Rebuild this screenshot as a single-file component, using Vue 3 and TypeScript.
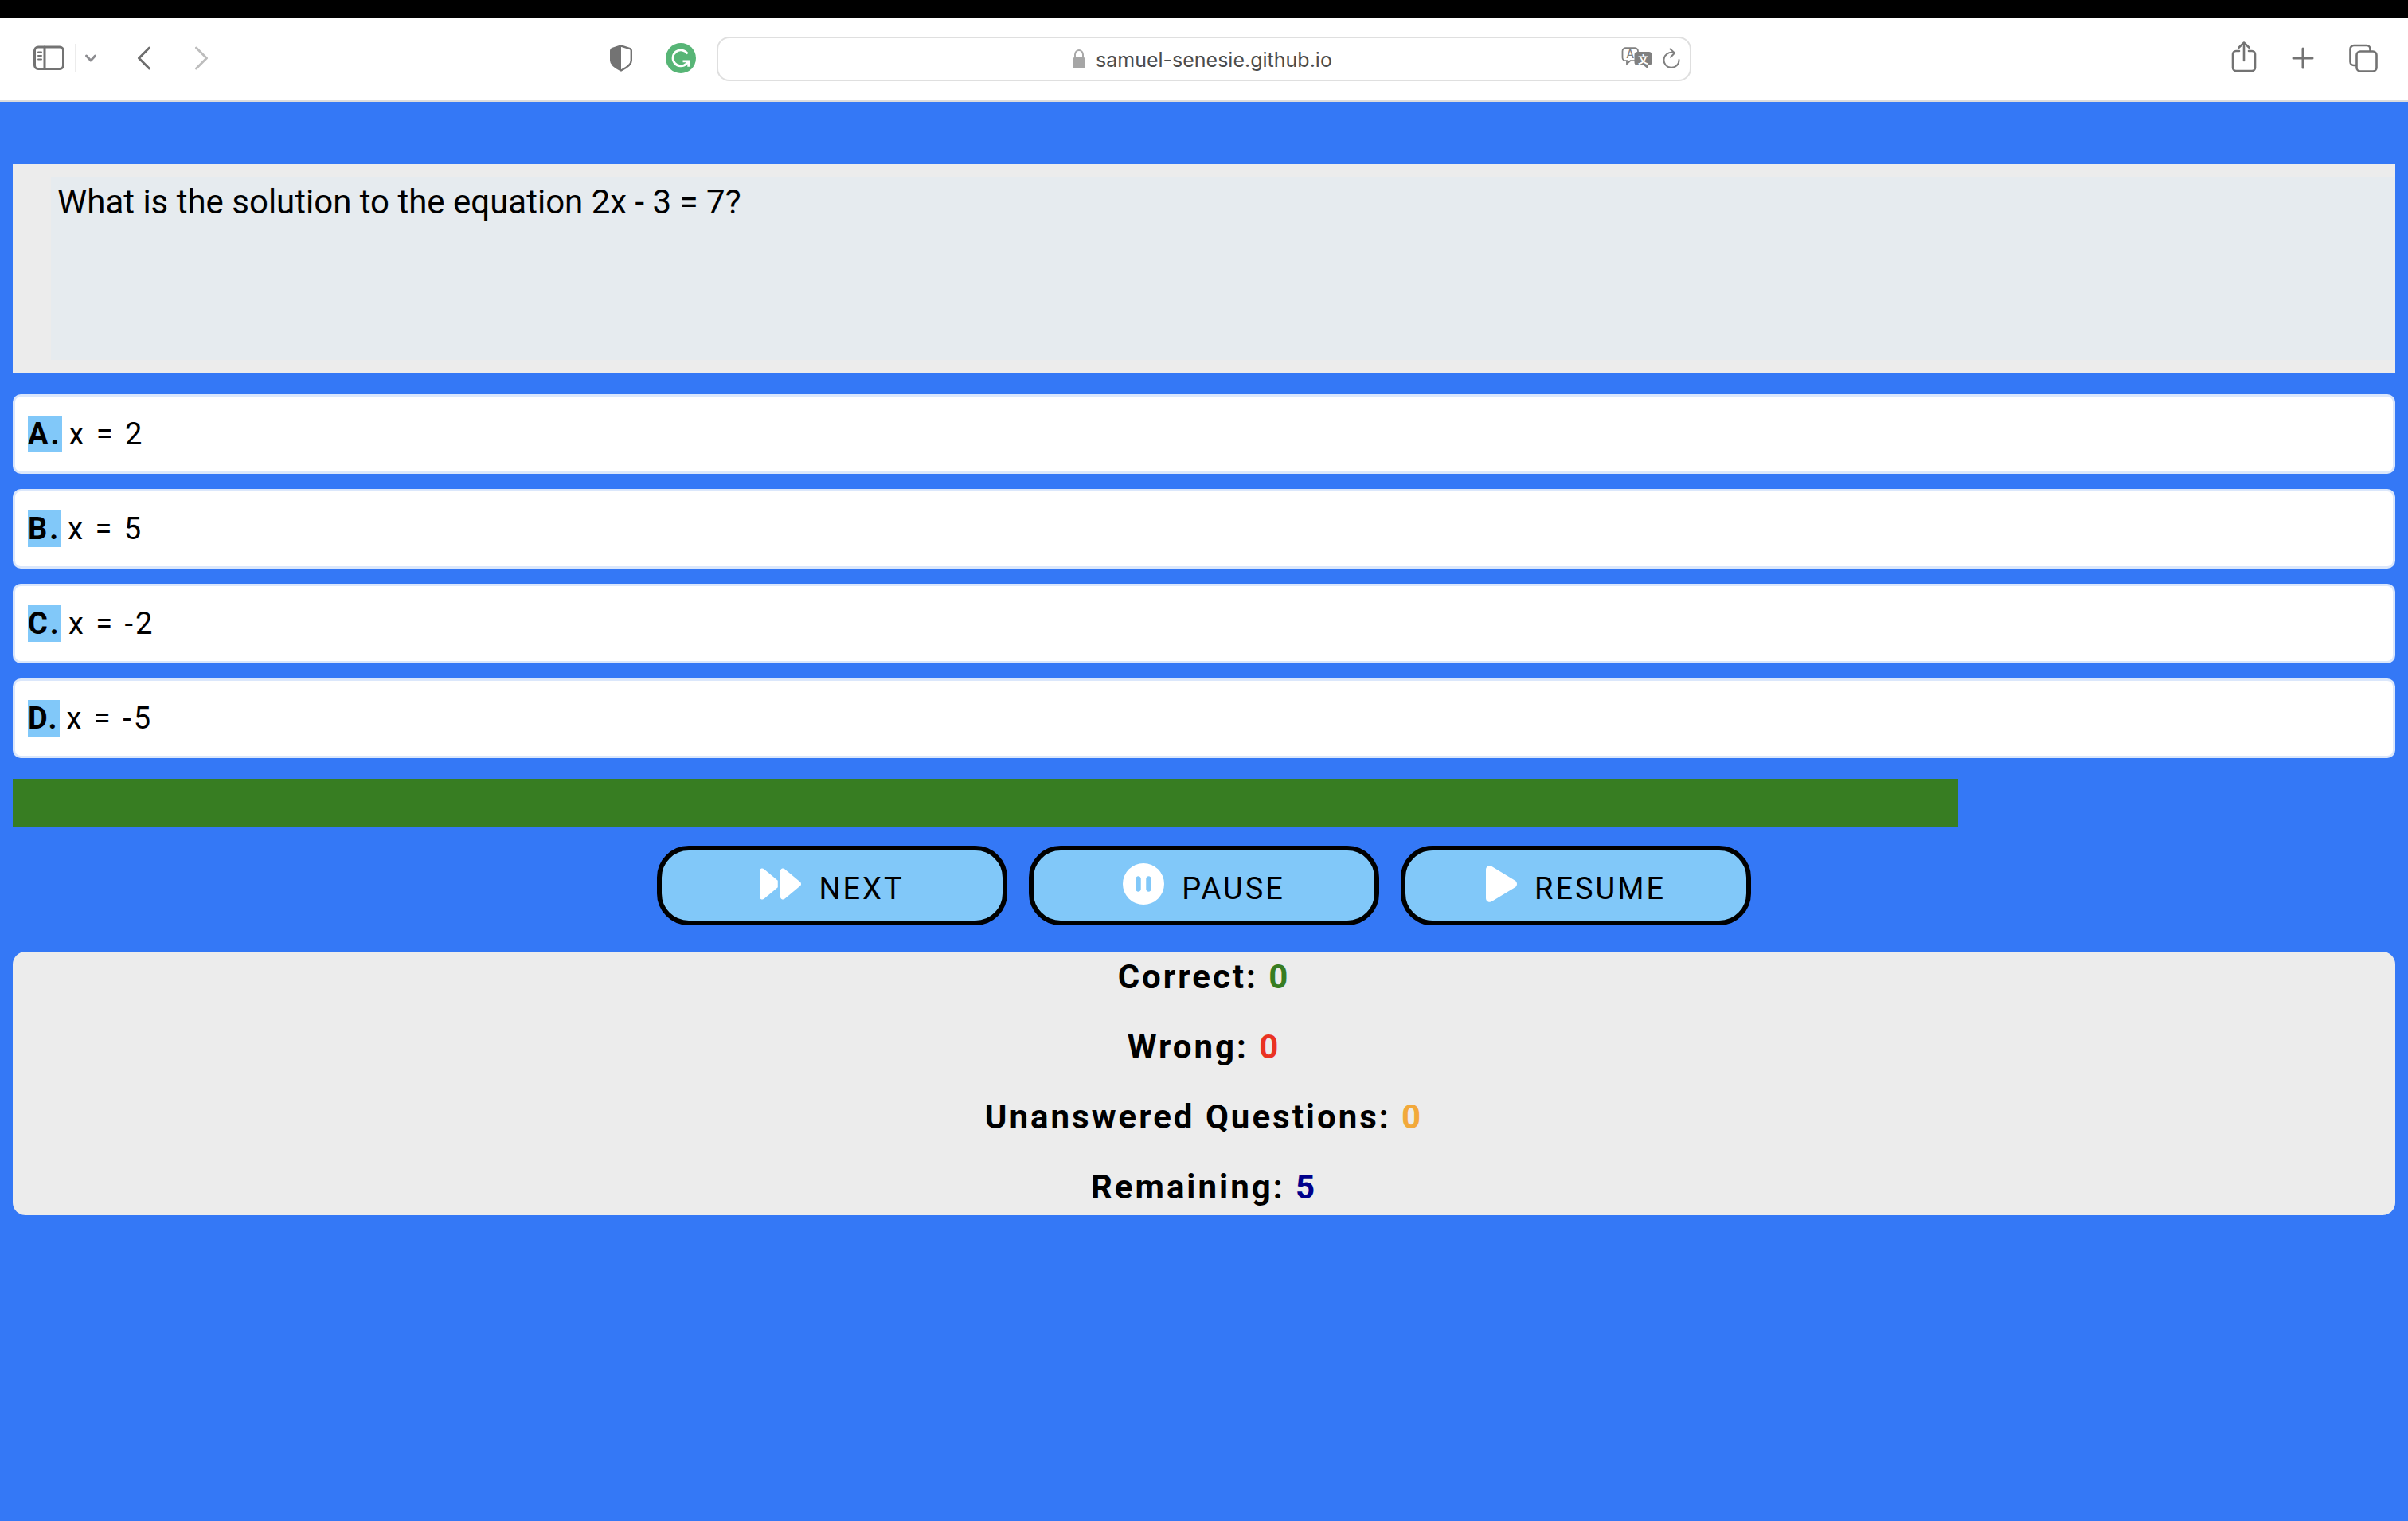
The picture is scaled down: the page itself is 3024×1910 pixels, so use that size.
<script setup lang="ts">
import { ref } from 'vue'

interface Answer {
  letter: string
  text: string
}

interface Stat {
  label: string
  value: number
  tone: string
}

const address = ref('samuel-senesie.github.io')
const question = 'What is the solution to the equation 2x - 3 = 7?'
const timeLeft = ref(81.65)

const answers: Answer[] = [
  { letter: 'A', text: 'x = 2' },
  { letter: 'B', text: 'x = 5' },
  { letter: 'C', text: 'x = -2' },
  { letter: 'D', text: 'x = -5' },
]

const stats: Stat[] = [
  { label: 'Correct', value: 0, tone: 'green' },
  { label: 'Wrong', value: 0, tone: 'red' },
  { label: 'Unanswered Questions', value: 0, tone: 'orange' },
  { label: 'Remaining', value: 5, tone: 'navy' },
]
</script>

<template>
  <div class="window">
    <header class="toolbar">
      <div class="side side-left">
        <button class="tool" type="button" aria-label="Show sidebar">
          <svg width="40" height="32" viewBox="0 0 40 32" fill="none" stroke="#737373" stroke-width="3" stroke-linecap="round">
            <rect x="1.5" y="2" width="36" height="27.500" rx="4.500" />
            <path d="M14 2v27.500" />
            <path d="M6 8.500h4M6 13h4M6 17.500h4" stroke-width="2" />
          </svg>
        </button>
        <span class="divider"></span>
        <button class="tool tool-menu" type="button" aria-label="Sidebar options">
          <svg width="16" height="12" viewBox="0 0 16 12" fill="none" stroke="#8c8c90" stroke-width="3" stroke-linecap="round" stroke-linejoin="round">
            <path d="M2.500 3L8 9l5.500-6" />
          </svg>
        </button>
        <button class="tool tool-back" type="button" aria-label="Back">
          <svg width="18" height="30" viewBox="0 0 18 30" fill="none" stroke="#6e6e6e" stroke-width="3" stroke-linecap="round" stroke-linejoin="round">
            <path d="M15.500 2L2.500 15l13 13" />
          </svg>
        </button>
        <button class="tool tool-forward" type="button" aria-label="Forward">
          <svg width="18" height="30" viewBox="0 0 18 30" fill="none" stroke="#bdbdbd" stroke-width="3" stroke-linecap="round" stroke-linejoin="round">
            <path d="M2.500 2l13 13-13 13" />
          </svg>
        </button>
        <div class="extensions">
          <button class="tool" type="button" aria-label="Privacy report">
            <svg width="28" height="34" viewBox="0 0 28 34">
              <path d="M14 1.500L2.800 5.200Q1.200 5.800 1.200 7.500V20c0 5 4.800 8.500 12.800 12.500C22 28.500 26.800 25 26.800 20V7.500q0-1.700-1.600-2.300z" fill="none" stroke="#737373" stroke-width="2.400" />
              <path d="M14 1.500L2.800 5.200Q1.200 5.800 1.200 7.500V20c0 5 4.800 8.500 12.800 12.500z" fill="#737373" />
            </svg>
          </button>
          <button class="tool" type="button" aria-label="Grammarly">
            <svg width="38" height="38" viewBox="0 0 38 38" fill="none" stroke="#fff" stroke-width="2.800">
              <circle cx="19" cy="19" r="19" fill="#57b576" stroke="none" />
              <path d="M27.500 13.500A10 10 0 1 0 26 26l3-3.200" />
              <path d="M21.500 22.800h7.200v7" />
            </svg>
          </button>
        </div>
      </div>

      <div class="address">
        <div class="address-main">
          <svg width="18" height="26" viewBox="0 0 18 26" aria-hidden="true">
            <path d="M4 12V7.500a5 5.500 0 0 1 10 0V12" fill="none" stroke="#a8a8a8" stroke-width="2" />
            <rect x="1" y="11" width="16" height="14" rx="2.500" fill="#a6a6a6" />
          </svg>
          <input v-model="address" class="address-input" type="text" aria-label="Address" />
        </div>
        <div class="address-tools">
          <button class="tool" type="button" aria-label="Translate">
            <svg width="40" height="30" viewBox="0 0 40 30">
              <path d="M5.500 2.200h11.500a4 4 0 0 1 4 4v8a4 4 0 0 1-4 4h-5.500l-4.500 4v-4H5.500a4 4 0 0 1-4-4v-8a4 4 0 0 1 4-4z" fill="none" stroke="#808080" stroke-width="1.800" />
              <text x="11.300" y="14.500" text-anchor="middle" class="glyph-latin">A</text>
              <path d="M20.500 7h14a4 4 0 0 1 4 4v9a4 4 0 0 1-4 4h-1v4.500L28 24h-7.500a4 4 0 0 1-4-4v-9a4 4 0 0 1 4-4z" fill="#808080" />
              <text x="27.500" y="20.500" text-anchor="middle" class="glyph-han">文</text>
            </svg>
          </button>
          <button class="tool" type="button" aria-label="Reload">
            <svg width="22" height="28" viewBox="0 0 22 28" fill="none" stroke="#808080" stroke-width="2" stroke-linecap="round" stroke-linejoin="round">
              <path d="M13.500 7.200A9.500 9.500 0 1 0 20.500 16" />
              <path d="M9.500 2.500l5.500 5-5 5.200" />
            </svg>
          </button>
        </div>
      </div>

      <div class="side side-right">
        <button class="tool" type="button" aria-label="Share">
          <svg width="32" height="44" viewBox="0 0 32 44" fill="none" stroke="#737373" stroke-width="2.600" stroke-linecap="round" stroke-linejoin="round">
            <path d="M10 13H6a4 4 0 0 0-4 4v17a4 4 0 0 0 4 4h20a4 4 0 0 0 4-4V17a4 4 0 0 0-4-4h-4" />
            <path d="M16 25V2.500M9.500 8.800L16 2.500l6.500 6.300" />
          </svg>
        </button>
        <button class="tool" type="button" aria-label="New tab">
          <svg width="28" height="28" viewBox="0 0 28 28" fill="none" stroke="#737373" stroke-width="3" stroke-linecap="round">
            <path d="M14 2v24M2 14h24" />
          </svg>
        </button>
        <button class="tool" type="button" aria-label="Tab overview">
          <svg width="36" height="36" viewBox="0 0 36 36" fill="none" stroke="#737373" stroke-width="2.600">
            <path d="M9 27H6a4.500 4.500 0 0 1-4.500-4.500v-16A4.500 4.500 0 0 1 6 2h16a4.500 4.500 0 0 1 4.500 4.500v3" />
            <rect x="9.500" y="9.500" width="25" height="25" rx="4.500" />
          </svg>
        </button>
      </div>
    </header>

    <main class="quiz">
      <section class="question">
        <p class="question-text">{{ question }}</p>
      </section>

      <div class="answers">
        <button v-for="answer in answers" :key="answer.letter" class="answer" type="button">
          <b class="letter">{{ answer.letter }}.</b>
          <span>{{ answer.text }}</span>
        </button>
      </div>

      <div class="timer" role="progressbar" aria-label="Time left" :aria-valuenow="timeLeft">
        <div class="timer-fill" :style="{ width: timeLeft + '%' }"></div>
      </div>

      <div class="controls">
        <button class="control" type="button">
          <svg width="52" height="52" viewBox="0 0 512 512" fill="#fff" aria-hidden="true">
            <path d="M52.500 440.600c-9.500 7.900-22.800 9.700-34.100 4.400S0 428.400 0 416V96C0 83.600 7.200 72.300 18.400 67s24.500-3.600 34.100 4.400L224 214.300V256v41.700L52.500 440.600zM256 352V256 128 96c0-12.400 7.200-23.700 18.400-29s24.500-3.600 34.100 4.400l192 160c7.300 6.100 11.500 15.100 11.500 24.600s-4.200 18.500-11.500 24.600l-192 160c-9.500 7.900-22.800 9.700-34.100 4.400s-18.400-16.600-18.400-29V352z" />
          </svg>
          <span class="control-label">NEXT</span>
        </button>
        <button class="control" type="button">
          <svg width="52" height="52" viewBox="0 0 512 512" fill="#fff" aria-hidden="true">
            <path d="M256 512A256 256 0 1 0 256 0a256 256 0 1 0 0 512zM224 192V320c0 17.700-14.300 32-32 32s-32-14.300-32-32V192c0-17.700 14.300-32 32-32s32 14.300 32 32zm128 0V320c0 17.700-14.300 32-32 32s-32-14.300-32-32V192c0-17.700 14.300-32 32-32s32 14.300 32 32z" />
          </svg>
          <span class="control-label">PAUSE</span>
        </button>
        <button class="control" type="button">
          <svg width="39" height="52" viewBox="0 0 384 512" fill="#fff" aria-hidden="true">
            <path d="M73 39c-14.800-9.100-33.400-9.400-48.500-.9S0 62.600 0 80V432c0 17.400 9.400 33.400 24.500 41.900s33.700 8.100 48.500-.9L361 297c14.300-8.700 23-24.200 23-41s-8.700-32.200-23-41L73 39z" />
          </svg>
          <span class="control-label">RESUME</span>
        </button>
      </div>

      <section class="stats">
        <p v-for="stat in stats" :key="stat.label" class="stat">
          {{ stat.label }}: <span :class="stat.tone">{{ stat.value }}</span>
        </p>
      </section>
    </main>
  </div>
</template>

<style>
body {
  background: #3478f6;
}
</style>

<style scoped>
.window {
  border-top: 22px solid #000;
  font-family: Roboto, "Noto Sans", sans-serif;
  color: #000;
}

button {
  margin: 0;
  font-family: inherit;
  color: inherit;
  cursor: pointer;
}

svg {
  display: block;
  flex: none;
}

/* Browser toolbar */
.toolbar {
  box-sizing: border-box;
  display: grid;
  grid-template-columns: 25fr 34fr 25fr;
  align-items: center;
  height: 106px;
  border-bottom: 2px solid #dcdcdc;
  background: #fff;
}

.tool {
  display: flex;
  padding: 0;
  border: 0;
  background: none;
}

.side {
  display: flex;
  align-items: center;
}

.side-left {
  padding: 0 26px 2px 42px;
}

.divider {
  width: 2px;
  height: 36px;
  margin-left: 12px;
  background: #ececec;
}

.tool-menu {
  margin-left: 10px;
}

.tool-back {
  margin-left: 50px;
}

.tool-forward {
  margin-left: 54px;
}

.extensions {
  display: flex;
  align-items: center;
  gap: 42px;
  margin-left: auto;
}

.side-right {
  justify-content: flex-end;
  gap: 44px;
  padding: 0 38px 2px 0;
}

.address {
  box-sizing: border-box;
  display: grid;
  grid-template-columns: 1fr auto 1fr;
  align-items: center;
  height: 56px;
  padding: 0 12px;
  border: 2px solid #dfdfdf;
  border-radius: 16px;
}

.address-main {
  grid-column: 2;
  display: flex;
  align-items: center;
  gap: 12px;
}

.address-input {
  width: 302px;
  padding: 2px 0 0;
  border: 0;
  outline: 0;
  background: none;
  font-family: Inter, sans-serif;
  font-size: 25px;
  line-height: 32px;
  color: #4c4c4c;
}

.address-tools {
  display: flex;
  align-items: center;
  justify-content: flex-end;
  gap: 12px;
  padding-bottom: 2px;
}

.glyph-latin {
  font: 500 14px Inter, sans-serif;
  fill: #808080;
}

.glyph-han {
  font: 700 13px "Noto Sans CJK SC", sans-serif;
  fill: #fff;
}

/* Quiz */
.quiz {
  display: flex;
  flex-direction: column;
  padding: 78px 16px 16px;
}

.question {
  padding: 16px 0 17px 48px;
  background: #ececec;
}

.question-text {
  min-height: 214px;
  margin: 0;
  padding: 6px 8px 10px;
  background: #e6ebef;
  font-size: 42px;
  line-height: 52px;
}

.answers {
  display: flex;
  flex-direction: column;
  gap: 19px;
  margin-top: 26px;
}

.answer {
  box-sizing: border-box;
  display: flex;
  align-items: center;
  gap: 9px;
  height: 100px;
  padding: 0 16px;
  border: 3px solid #dbe7fb;
  border-radius: 10px;
  background: #fff;
  font-size: 38px;
  line-height: 46px;
  letter-spacing: 3px;
  text-align: left;
}

.letter {
  background: #81c8f9;
}

.timer {
  margin-top: 26px;
}

.timer-fill {
  height: 60px;
  background: #377d22;
}

.controls {
  display: flex;
  justify-content: center;
  gap: 27px;
  margin-top: 24px;
}

.control {
  box-sizing: border-box;
  display: flex;
  align-items: center;
  justify-content: center;
  gap: 22px;
  width: 440px;
  height: 100px;
  padding: 0 0 4px;
  border: 6px solid #000;
  border-radius: 40px;
  background: #81c8f9;
  font-size: 38px;
  line-height: 46px;
  letter-spacing: 3px;
}

.control-label {
  padding-top: 12px;
}

.stats {
  display: flex;
  flex-direction: column;
  gap: 36px;
  margin-top: 33px;
  padding: 6px 0 9px;
  border-radius: 16px;
  background: #ececec;
  text-align: center;
}

.stat {
  margin: 0;
  font-size: 42px;
  font-weight: 700;
  line-height: 52px;
  letter-spacing: 3px;
}

.green {
  color: #377d22;
}

.red {
  color: #ea3323;
}

.orange {
  color: #f2a93b;
}

.navy {
  color: #00008b;
}
</style>
